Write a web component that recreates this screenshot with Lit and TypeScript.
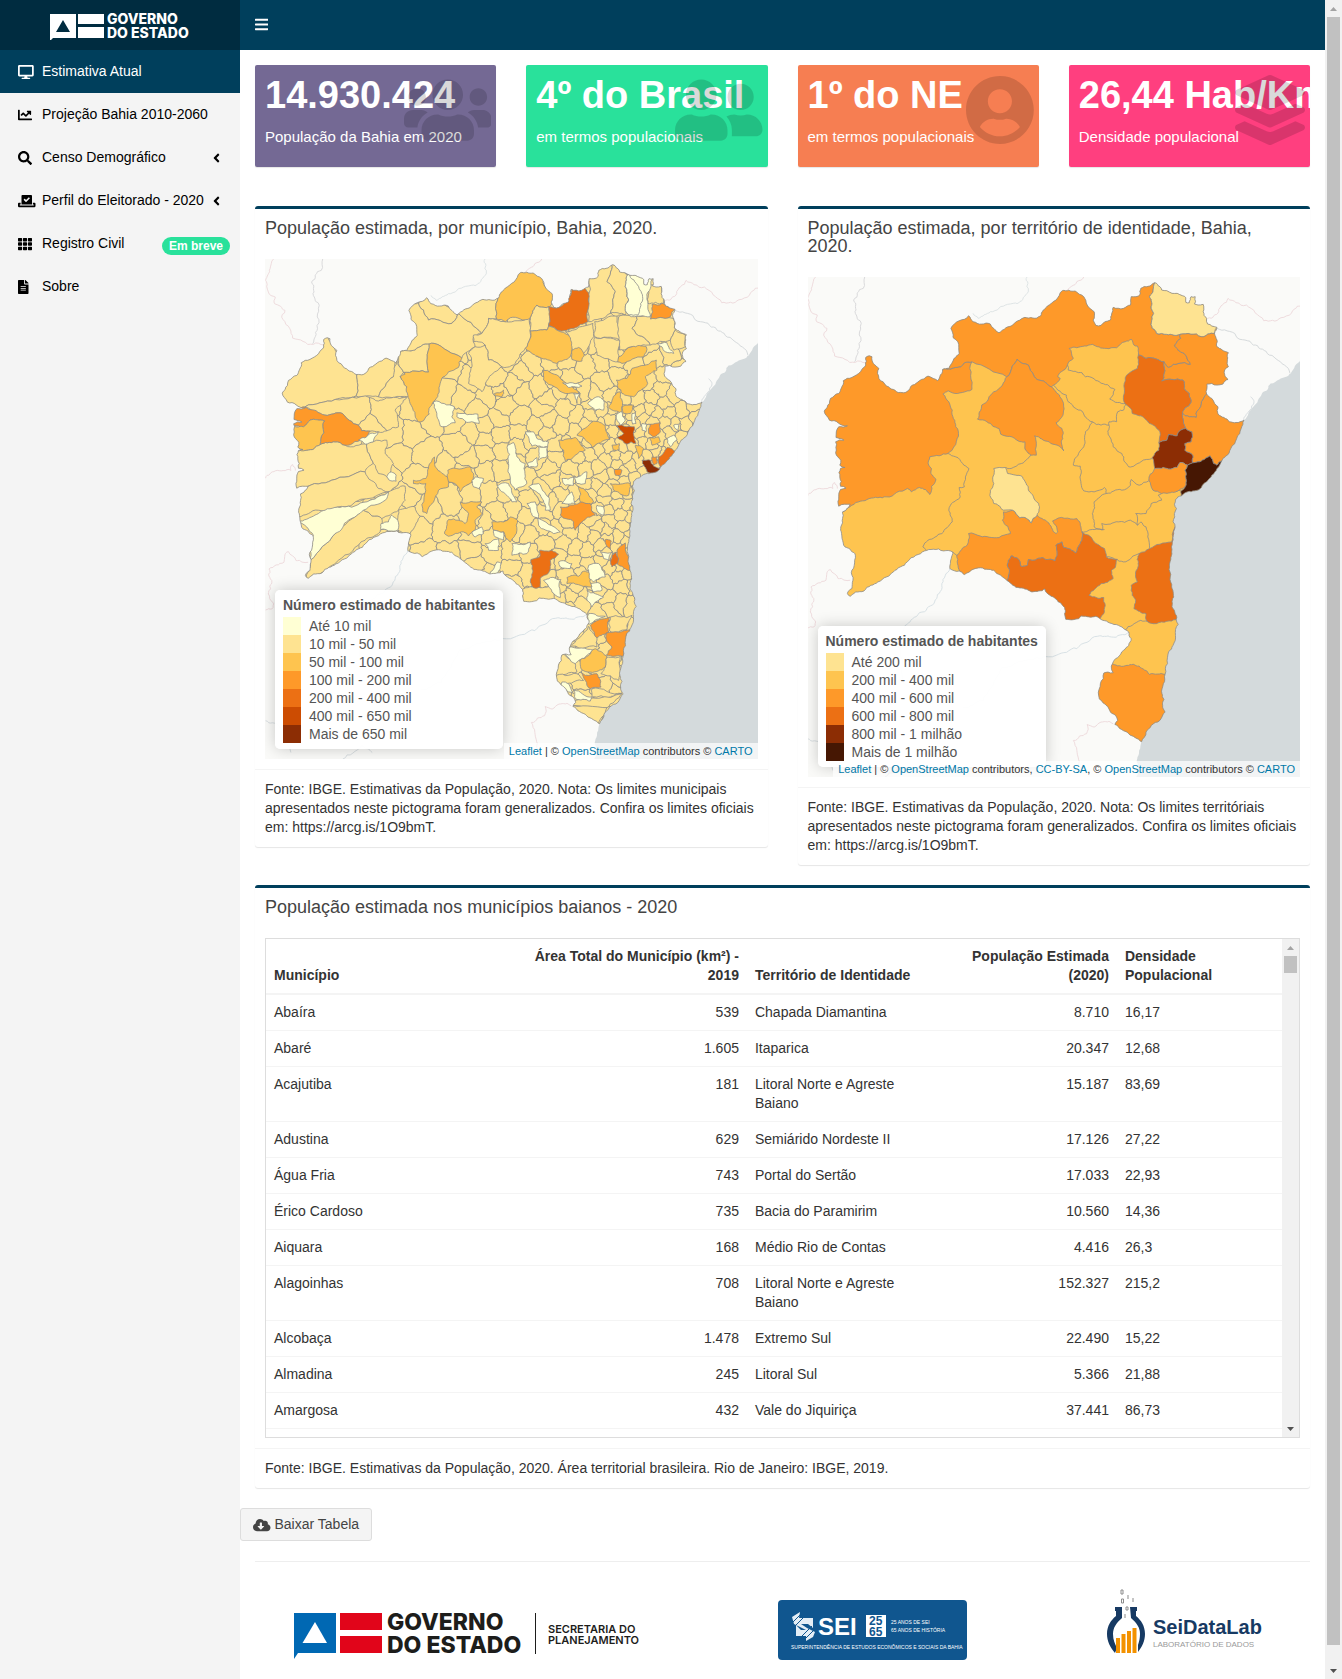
import { LitElement, html, css, svg, nothing } from "lit";
import { customElement, property } from "lit/decorators.js";

/* ---------------------------------------------------------------- icons */

interface Glyph { w: number; d: string }

const ICONS: Record<string, Glyph> = {
  bars: { w: 448, d: "M16 132h416c8.837 0 16-7.163 16-16V76c0-8.837-7.163-16-16-16H16C7.163 60 0 67.163 0 76v40c0 8.837 7.163 16 16 16zm0 160h416c8.837 0 16-7.163 16-16v-40c0-8.837-7.163-16-16-16H16c-8.837 0-16 7.163-16 16v40c0 8.837 7.163 16 16 16zm0 160h416c8.837 0 16-7.163 16-16v-40c0-8.837-7.163-16-16-16H16c-8.837 0-16 7.163-16 16v40c0 8.837 7.163 16 16 16z" },
  desktop: { w: 576, d: "M528 0H48C21.5 0 0 21.5 0 48v320c0 26.5 21.5 48 48 48h192l-16 48h-72c-13.3 0-24 10.7-24 24s10.7 24 24 24h272c13.3 0 24-10.7 24-24s-10.7-24-24-24h-72l-16-48h192c26.5 0 48-21.5 48-48V48c0-26.5-21.5-48-48-48zm-16 352H64V64h448v288z" },
  chart: { w: 512, d: "M496 384H64V80c0-8.84-7.16-16-16-16H16C7.16 64 0 71.16 0 80v336c0 17.67 14.33 32 32 32h464c8.84 0 16-7.16 16-16v-32c0-8.84-7.16-16-16-16zM464 96H345.94c-21.38 0-32.09 25.85-16.97 40.97l32.4 32.4L288 242.75l-73.37-73.37c-12.5-12.5-32.76-12.5-45.25 0l-68.69 68.69c-6.25 6.25-6.25 16.38 0 22.63l22.62 22.62c6.25 6.25 16.38 6.25 22.63 0L192 237.25l73.37 73.37c12.5 12.5 32.76 12.5 45.25 0l96-96 32.4 32.4c15.12 15.12 40.97 4.41 40.97-16.97V112c.01-8.84-7.15-16-15.99-16z" },
  search: { w: 512, d: "M505 442.7L405.3 343c-4.5-4.5-10.6-7-17-7H372c27.6-35.3 44-79.7 44-128C416 93.1 322.9 0 208 0S0 93.1 0 208s93.1 208 208 208c48.3 0 92.7-16.4 128-44v16.3c0 6.4 2.5 12.5 7 17l99.7 99.7c9.4 9.4 24.6 9.4 33.9 0l28.3-28.3c9.4-9.4 9.4-24.6.1-34zM208 336c-70.7 0-128-57.2-128-128 0-70.7 57.2-128 128-128 70.7 0 128 57.2 128 128 0 70.7-57.2 128-128 128z" },
  vote: { w: 640, d: "M608 320h-64v64h22.4c5.3 0 9.6 3.6 9.6 8v16c0 4.4-4.3 8-9.6 8H73.6c-5.3 0-9.6-3.6-9.6-8v-16c0-4.4 4.3-8 9.6-8H96v-64H32c-17.7 0-32 14.3-32 32v96c0 17.7 14.3 32 32 32h576c17.7 0 32-14.3 32-32v-96c0-17.7-14.3-32-32-32zm-96 64V64.3c0-17.9-14.5-32.3-32.3-32.3H160.4C142.5 32 128 46.5 128 64.3V384h384zM211.2 202l25.5-25.3c4.2-4.2 11-4.2 15.2.1l41.3 41.6 95.2-94.4c4.2-4.2 11-4.2 15.2.1l25.3 25.5c4.2 4.2 4.2 11-.1 15.2L300.5 292c-4.2 4.2-11 4.2-15.2-.1l-74.1-74.7c-4.3-4.2-4.2-11 0-15.2z" },
  grid: { w: 512, d: "M24 32h102q24 0 24 24v80q0 24-24 24H24q-24 0-24-24V56q0-24 24-24zM205 32h102q24 0 24 24v80q0 24-24 24H205q-24 0-24-24V56q0-24 24-24zM386 32h102q24 0 24 24v80q0 24-24 24H386q-24 0-24-24V56q0-24 24-24zM24 192h102q24 0 24 24v80q0 24-24 24H24q-24 0-24-24v-80q0-24 24-24zM205 192h102q24 0 24 24v80q0 24-24 24H205q-24 0-24-24v-80q0-24 24-24zM386 192h102q24 0 24 24v80q0 24-24 24H386q-24 0-24-24v-80q0-24 24-24zM24 352h102q24 0 24 24v80q0 24-24 24H24q-24 0-24-24v-80q0-24 24-24zM205 352h102q24 0 24 24v80q0 24-24 24H205q-24 0-24-24v-80q0-24 24-24zM386 352h102q24 0 24 24v80q0 24-24 24H386q-24 0-24-24v-80q0-24 24-24z" },
  file: { w: 384, d: "M224 136V0H24C10.7 0 0 10.7 0 24v464c0 13.3 10.7 24 24 24h336c13.3 0 24-10.7 24-24V160H248c-13.2 0-24-10.8-24-24zm64 236c0 6.6-5.4 12-12 12H108c-6.6 0-12-5.4-12-12v-8c0-6.6 5.4-12 12-12h168c6.6 0 12 5.4 12 12v8zm0-64c0 6.6-5.4 12-12 12H108c-6.6 0-12-5.4-12-12v-8c0-6.6 5.4-12 12-12h168c6.6 0 12 5.4 12 12v8zm0-72v8c0 6.6-5.4 12-12 12H108c-6.6 0-12-5.4-12-12v-8c0-6.6 5.4-12 12-12h168c6.6 0 12 5.4 12 12zm96-114.1v6.1H256V0h6.1c6.4 0 12.5 2.5 17 7l97.9 98c4.5 4.5 7 10.6 7 16.9z" },
  angle: { w: 256, d: "M31.7 239l136-136c9.4-9.4 24.6-9.4 33.9 0l22.6 22.6c9.4 9.4 9.4 24.6 0 33.9L127.9 256l96.4 96.4c9.4 9.4 9.4 24.6 0 33.9L201.7 409c-9.4 9.4-24.6 9.4-33.9 0l-136-136c-9.5-9.4-9.5-24.6-.1-34z" },
  cloud: { w: 640, d: "M537.6 226.6c4.1-10.7 6.4-22.4 6.4-34.6 0-53-43-96-96-96-19.7 0-38.1 6-53.3 16.2C367 64.2 315.3 32 256 32c-88.4 0-160 71.6-160 160 0 2.7.1 5.4.2 8.1C40.2 219.8 0 273.2 0 336c0 79.5 64.5 144 144 144h368c70.7 0 128-57.3 128-128 0-61.9-44-113.6-102.4-125.4zm-132.9 88.7L299.3 420.7c-6.2 6.2-16.4 6.2-22.6 0L171.3 315.3c-10.1-10.1-2.9-27.3 11.3-27.3H248V176c0-8.8 7.2-16 16-16h48c8.8 0 16 7.2 16 16v112h65.4c14.2 0 21.4 17.2 11.3 27.3z" },
  users: { w: 640, d: "M96 224c35.3 0 64-28.7 64-64s-28.7-64-64-64-64 28.7-64 64 28.7 64 64 64zm448 0c35.3 0 64-28.7 64-64s-28.7-64-64-64-64 28.7-64 64 28.7 64 64 64zm32 32h-64c-17.6 0-33.5 7.1-45.1 18.6 40.3 22.1 68.9 62 75.1 109.4h66c17.7 0 32-14.3 32-32v-32c0-35.3-28.7-64-64-64zm-256 0c61.9 0 112-50.1 112-112S381.9 32 320 32 208 82.1 208 144s50.1 112 112 112zm76.8 32h-8.3c-20.8 10-43.9 16-68.5 16s-47.6-6-68.5-16h-8.3C179.6 288 128 339.6 128 403.2V432c0 26.5 21.5 48 48 48h288c26.5 0 48-21.5 48-48v-28.8c0-63.6-51.6-115.2-115.2-115.2zm-223.7-13.4C161.5 263.1 145.6 256 128 256H64c-35.3 0-64 28.7-64 64v32c0 17.7 14.3 32 32 32h65.9c6.3-47.4 34.9-87.3 75.2-109.4z" },
  friends: { w: 640, d: "M192 256c61.9 0 112-50.1 112-112S253.9 32 192 32 80 82.1 80 144s50.1 112 112 112zm76.8 32h-8.3c-20.8 10-43.9 16-68.5 16s-47.6-6-68.5-16h-8.3C51.6 288 0 339.6 0 403.2V432c0 26.5 21.5 48 48 48h288c26.5 0 48-21.5 48-48v-28.8c0-63.6-51.6-115.2-115.2-115.2zM480 256c53 0 96-43 96-96s-43-96-96-96-96 43-96 96 43 96 96 96zm48 32h-3.8c-13.9 4.8-28.6 8-44.2 8s-30.3-3.2-44.2-8H432c-20.4 0-39.2 5.9-55.7 15.4 24.4 26.3 39.7 61.2 39.7 99.8v38.4c0 2.2-.5 4.3-.6 6.4H592c26.5 0 48-21.5 48-48 0-61.9-50.1-112-112-112z" },
  circle: { w: 496, d: "M248 8C111 8 0 119 0 256s111 248 248 248 248-111 248-248S385 8 248 8zm0 96c48.6 0 88 39.4 88 88s-39.4 88-88 88-88-39.4-88-88 39.4-88 88-88zm0 344c-58.7 0-111.3-26.6-146.5-68.2 18.8-35.4 55.6-59.8 98.5-59.8 2.4 0 4.8.4 7.1 1.1 13 4.2 26.6 6.9 40.9 6.9 14.3 0 28-2.7 40.9-6.9 2.3-.7 4.7-1.1 7.1-1.1 42.9 0 79.7 24.4 98.5 59.8C359.3 421.4 306.7 448 248 448z" },
  layers: { w: 512, d: "M12.41 148.02l232.94 105.67c6.8 3.09 14.49 3.09 21.29 0l232.94-105.67c16.55-7.51 16.55-32.52 0-40.03L266.65 2.31a25.607 25.607 0 0 0-21.29 0L12.41 107.98c-16.55 7.51-16.55 32.53 0 40.04zm487.18 88.28l-58.09-26.33-161.64 73.27c-7.56 3.43-15.59 5.17-23.86 5.17s-16.29-1.74-23.86-5.17L70.51 209.97l-58.1 26.33c-16.55 7.5-16.55 32.5 0 40l232.94 105.59c6.8 3.08 14.49 3.08 21.29 0L499.59 276.3c16.55-7.5 16.55-32.5 0-40zm0 127.8l-57.87-26.23-161.86 73.37c-7.56 3.43-15.59 5.17-23.86 5.17s-16.29-1.74-23.86-5.17L70.29 337.87 12.41 364.1c-16.55 7.5-16.55 32.5 0 40l232.94 105.59c6.8 3.08 14.49 3.08 21.29 0L499.59 404.1c16.55-7.5 16.55-32.5 0-40z" },
};

const icon = (name: string, cls: string) => {
  const g = ICONS[name];
  return html`<svg class=${cls} viewBox="0 0 ${g.w} 512" aria-hidden="true"><path fill="currentColor" d=${g.d}></path></svg>`;
};

/* ------------------------------------------------------------- geometry */

type Pt = [number, number];

const parse = (s: string): Pt[] => s.trim().split(/\s+/).map((p) => p.split(",").map(Number) as Pt);

/** Stable noise in -1..1 for a segment, the same in both directions. */
const noise = (a: Pt, b: Pt, k: number) => {
  const v = Math.sin((a[0] + b[0]) * 12.9898 + (a[1] + b[1]) * 78.233 + k * 37.7) * 43758.5453;
  return (v - Math.floor(v)) * 2 - 1;
};

const split = (a: Pt, b: Pt, depth: number, amount: number): Pt[] => {
  const flip = a[0] > b[0] || (a[0] === b[0] && a[1] > b[1]);
  const [p, q] = flip ? [b, a] : [a, b];
  const dx = q[0] - p[0], dy = q[1] - p[1];
  const len = Math.hypot(dx, dy);
  if (depth === 0 || len < 9) return [a];
  const off = noise(p, q, depth) * Math.min(len * amount, 5) / len;
  const m: Pt = [(p[0] + q[0]) / 2 - dy * off, (p[1] + q[1]) / 2 + dx * off];
  return [...split(a, m, depth - 1, amount), ...split(m, b, depth - 1, amount)];
};

/** Path data of a border with small natural irregularities. */
const path = (pts: Pt[], closed = true, amount = 0.14) => {
  const out: Pt[] = [];
  const n = closed ? pts.length : pts.length - 1;
  for (let i = 0; i < n; i++) out.push(...split(pts[i], pts[(i + 1) % pts.length], 3, amount));
  if (!closed) out.push(pts[pts.length - 1]);
  return "M" + out.map((p) => p[0].toFixed(1) + " " + p[1].toFixed(1)).join("L") + (closed ? "Z" : "");
};

const COAST = "1283,510 1275,535 1262,565 1245,595 1230,618 1218,633 1205,655 1190,675 1175,695 1160,712 1140,722 1120,725 1102,737 1085,748 1082,762 1088,775 1082,790 1083,800 1078,815 1084,830 1080,850 1076,875 1074,905 1068,950 1070,980 1074,1010 1076,1050 1083,1085 1087,1108 1093,1122 1085,1155 1078,1185 1065,1205 1062,1240 1055,1272 1050,1300 1046,1330 1048,1365 1055,1385 1040,1410 1015,1425 1000,1445 987,1474";

const STATE = parse(
  "1025,98 1040,110 1045,120 1060,122 1075,130 1090,130 1105,137 1115,143 1115,157 1125,158 1130,140 1142,140 1143,155 1140,162 1150,165 1165,163 1165,185 1175,205 1178,222 1190,228 1205,232 1203,240 1198,250 1205,270 1205,290 1220,300 1238,308 1238,350 1228,358 1228,378 1237,388 1222,402 1205,405 1190,400 1176,402 1175,432 1190,445 1198,460 1208,470 1208,492 1225,502 1240,515 1260,517 " +
  COAST +
  " 950,1450 910,1422 918,1410 912,1395 895,1380 880,1360 865,1345 863,1335 868,1300 878,1268 890,1265 905,1267 900,1255 903,1240 918,1222 935,1200 950,1185 957,1165 950,1145 940,1138 920,1125 895,1118 875,1110 855,1098 845,1100 825,1098 812,1097 805,1105 790,1108 768,1107 765,1072 740,1047 708,1016 690,1022 670,1025 655,1017 635,1013 615,1005 600,992 580,975 560,960 540,957 515,953 490,965 475,973 460,962 433,955 437,925 441,905 415,902 385,897 360,902 335,915 310,935 290,950 270,965 250,980 225,995 205,1005 185,1022 160,1025 145,1038 137,1030 150,1015 153,990 150,960 158,930 160,915 148,902 130,890 125,878 120,850 118,830 123,805 123,785 140,772 145,762 112,768 112,740 117,718 133,714 117,708 115,680 117,655 130,652 115,645 118,630 103,608 103,575 127,570 104,562 112,530 137,527 110,518 85,510 70,483 85,460 88,445 112,430 125,392 150,382 175,365 190,345 190,322 200,317 208,320 212,340 228,355 228,385 250,408 270,418 290,427 308,425 325,405 345,392 370,378 385,385 398,392 410,370 412,358 430,355 445,325 460,310 456,275 442,262 436,235 460,212 487,197 500,215 525,222 550,222 560,235 575,248 590,238 610,228 630,212 650,202 695,198 715,168 740,150 758,122 795,123 820,140 830,165 850,185 847,210 855,226 870,226 897,210 905,172 935,175 955,165 957,140 983,133 985,115"
);
const STATE_PATH = path(STATE);
const SEA_PATH = path(parse("1480,290 1446,328 1418,370 1385,388 1360,400 1335,430 1310,470 " + COAST + " 980,1500 976,1540 975,1620 1480,1620"));

const C = { a: "#ffffd4", b: "#fee391", c: "#fec44f", d: "#fe9929", e: "#ec7014", f: "#cc4c02", g: "#8c2d04", h: "#461703" };

const TERRITORIES: [string, string][] = [
  [C.d, "0,250 412,250 412,358 425,357 465,350 475,338 497,335 497,418 440,428 428,422 413,432 430,455 440,480 450,530 458,558 445,590 428,610 375,620 372,645 380,655 378,670 393,687 375,733 345,712 322,725 310,715 250,740 200,745 150,765 123,785 0,785"],
  [C.d, "425,357 400,300 400,100 1020,60 1025,98 1010,140 1015,175 1022,190 1018,235 1030,250 1060,253 1098,253 1100,265 1083,285 1110,310 1128,343 1095,340 1065,352 1052,335 1030,327 1000,325 978,315 975,288 965,285 958,268 940,275 915,293 885,295 845,283 800,293 778,295 790,325 773,345 755,365 745,380 752,385 733,405 725,412 715,402 690,390 675,375 660,345 627,328 610,360 597,380 497,335 475,338 465,350"],
  [C.b, "1025,98 1030,60 1260,80 1260,232 1205,232 1198,250 1160,260 1098,253 1060,253 1030,250 1018,235 1022,190 1015,175 1010,140"],
  [C.d, "1098,253 1160,260 1198,250 1300,250 1300,420 1175,432 1160,455 1150,480 1145,502 1125,500 1105,490 1118,470 1130,450 1125,430 1110,415 1107,390 1075,388 1045,393 1052,370 1052,335 1065,352 1095,340 1128,343 1110,310 1083,285 1100,265"],
  [C.d, "1175,432 1300,400 1320,640 1218,633 1205,645 1195,640 1185,617 1150,635 1135,638 1135,615 1112,600 1112,580 1130,575 1132,545 1115,535 1105,490 1125,500 1145,502 1150,480 1160,455"],
  [C.e, "978,315 1000,325 1030,327 1052,335 1052,370 1045,393 1075,388 1107,390 1110,415 1125,430 1130,450 1118,470 1105,490 1115,535 1100,540 1090,557 1065,553 1060,570 1037,578 1040,545 1010,520 980,497 960,490 940,462 937,430 937,400 950,370 975,355 978,330"],
  [C.g, "1115,535 1132,545 1130,575 1112,580 1112,600 1135,615 1135,638 1120,645 1098,637 1090,652 1070,657 1050,652 1025,655 1018,622 1037,600 1037,578 1060,570 1065,553 1090,557 1100,540"],
  [C.d, "1025,655 1050,652 1070,657 1090,652 1098,637 1120,645 1113,660 1113,710 1085,725 1045,730 1020,720 1008,690 1012,672"],
  [C.h, "1185,617 1195,640 1205,645 1218,633 1300,650 1102,780 1100,725 1113,710 1113,660 1120,645 1135,638 1150,635"],
  [C.d, "627,328 660,345 675,375 690,390 715,402 735,420 750,435 762,470 760,495 740,518 757,535 755,575 762,602 720,575 678,557 683,580 683,615 668,615 652,600 650,575 630,572 580,552 575,535 540,515 513,507 525,465 560,425 585,405 597,380 610,360"],
  [C.d, "588,785 615,780 635,803 655,805 668,818 685,795 715,815 740,850 745,845 730,812 800,805 810,825 815,845 810,880 797,908 762,892 757,875 740,885 737,932 700,922 660,928 657,945 637,947 630,925 610,917 602,930 603,975 598,992 520,1000 475,980 463,965 453,915 483,885 487,850 520,857 575,862 608,850 585,810"],
  [C.b, "560,655 592,652 600,670 643,680 660,720 690,760 685,795 668,818 655,805 635,803 615,780 588,780 560,760 550,720 560,700"],
  [C.e, "815,845 880,895 885,920 917,927 900,960 905,985 870,1000 835,1035 878,1042 878,1090 868,1104 850,1130 700,1130 598,992 603,975 602,930 610,917 630,925 637,947 657,945 660,928 700,922 737,932 740,885 757,875 762,892 797,908 810,880"],
  [C.e, "980,910 1010,895 1040,882 1074,875 1078,845 1084,830 1110,850 1120,1108 1087,1108 1060,1113 1030,1120 1003,1113 1000,1090 965,1075 970,1050 960,1035 957,1005 975,995 970,965 978,945"],
  [C.d, "903,1240 945,1245 980,1247 1010,1272 1055,1272 1090,1272 1090,1500 840,1500 840,1240"],
];

const TERRITORY_LINES = [
  "428,610 450,620 470,640 488,655 478,680 475,710 460,712 463,740 435,765 430,780 440,815 410,850 370,870 355,890 365,900",
  "441,905 453,915", "668,615 640,640 610,655 592,652",
  "773,345 775,360 815,368 825,380 865,395 910,418 895,447 942,460",
  "733,405 745,420 770,435 775,455 810,480 845,515 870,525 893,525 893,515 915,515 918,485 935,480 942,462",
  "845,515 825,545 820,590 805,610 790,645 810,648 812,700 820,722 850,725 880,712 885,730",
  "893,525 895,560 905,590 930,610 950,650 985,635 1018,625",
  "885,730 930,720 955,705 957,688 980,705 1008,692",
  "885,730 850,755 845,790 850,830 875,838 872,820 920,815 955,810 975,825 985,815 1000,830 1005,860 1010,893",
  "975,825 975,800 970,790 1000,790 1015,760 1045,750 1035,735 1045,730",
  "815,845 850,838 880,838", "885,920 935,935 980,910", "940,1138 960,1125 985,1110 1003,1113", "1085,725 1102,720",
];

/* Larger municipalities of the north, west and south. */
const MUNICIPALITIES: [string, string][] = [
  ["b", "60,300 200,240 240,300 305,372 303,438 240,448 150,470 100,475 50,430"],
  ["b", "305,372 350,310 395,312 420,335 415,380 370,440 303,438"],
  ["b", "415,380 425,330 445,367 435,380 455,410 460,440 370,440"],
  ["b", "150,470 240,448 343,442 345,490 310,525 262,490 210,495"],
  ["b", "343,442 380,450 410,443 455,442 420,480 430,530 395,542 345,490"],
  ["b", "345,490 395,542 370,545 345,543 320,542 310,525"],
  ["b", "100,600 155,600 195,583 240,575 270,585 335,580 355,640 330,665 230,690 150,715 130,722 100,720"],
  ["b", "130,722 150,715 230,690 330,665 370,715 400,725 270,770 190,780 130,800 100,800"],
  ["b", "240,850 325,780 380,805 375,845 330,870 250,930 150,1000 165,930"],
  ["b", "335,580 395,570 390,610 415,640 395,680 370,670 355,640"],
  ["b", "400,725 450,708 450,750 430,780 380,805 325,780 345,750"],
  ["b", "430,780 480,770 495,800 465,850 428,840"],
  ["b", "490,158 510,132 530,160 555,155 610,190 590,220 520,210 505,180"],
  ["b", "430,305 440,170 490,158 505,180 520,210 590,220 610,190 680,250 655,260 660,290 620,324 537,280 522,282 480,300"],
  ["b", "428,305 480,300 522,282 520,366 445,367 430,340"],
  ["b", "610,190 650,140 728,145 724,207 700,205 680,250"],
  ["b", "700,205 750,215 825,203 825,265 810,295 775,345 740,350 700,330 690,285 655,275 655,255 680,250"],
  ["b", "660,290 690,285 700,330 740,350 700,385 680,425 640,400 650,340 640,310"],
  ["b", "1000,85 1025,55 1068,35 1055,95 1080,125 1065,190 1000,215"],
  ["b", "1055,95 1068,35 1120,75 1110,110 1120,150 1110,195 1065,190 1080,125"],
  ["b", "1018,215 1085,198 1093,270 1018,260"],
  ["b", "1090,200 1145,198 1130,235 1185,285 1130,290 1093,300"],
  ["b", "1145,198 1255,205 1260,240 1245,270 1185,285 1130,235"],
  ["b", "1260,240 1290,255 1290,290 1255,300 1245,270"],
  ["b", "1180,110 1215,105 1225,160 1177,160"],
  ["b", "1018,262 1093,270 1090,335 1025,315"],
  ["b", "930,245 1013,220 1015,260 985,310 950,300 940,255"],
  ["b", "825,203 845,165 883,170 880,228 875,240 825,243"],
  ["b", "940,1190 1000,1128 1025,1162 1025,1190"],
  ["b", "900,1275 915,1205 960,1240 965,1265"], ["b", "895,1275 965,1270 985,1290 935,1300 895,1310"],
  ["b", "1010,1315 1100,1328 1065,1340 1010,1340"],
  ["b", "945,1365 960,1350 1100,1330 1055,1372"], ["b", "940,1368 1055,1372 1030,1430"],
  ["b", "1055,1220 1095,1218 1090,1290 1037,1270 1050,1250"],
  ["b", "1065,1100 1130,1095 1115,1138 1063,1142"],
  ["b", "800,1018 850,1010 900,1010 900,1060 800,1060"],
  ["c", "435,380 450,372 445,367 520,366 522,282 537,280 620,324 610,352 580,365 555,400 540,450 525,470 522,492 505,512 488,515 465,460 455,410"],
  ["c", "728,145 750,112 770,93 780,75 800,60 830,60 860,78 875,115 895,130 883,170 845,165 825,203 765,203 750,215 724,207"],
  ["d", "110,475 155,473 210,495 262,490 310,525 320,542 345,543 330,565 270,585 240,575 195,583 208,512 165,510 145,530 105,530"],
  ["c", "105,532 145,530 165,510 208,512 195,583 155,600 115,595"],
  ["a", "535,455 598,470 590,500 600,518 555,527 545,490"], ["a", "605,488 668,492 672,520 635,517 605,500"],
  ["a", "310,570 345,550 370,545 355,575 330,582"],
  ["c", "475,690 512,685 520,650 538,620 540,650 582,685 580,710 550,720 515,790 503,785 512,700 475,700"],
  ["c", "578,660 645,650 655,670 650,695 615,725 600,700 580,695"],
  ["a", "650,690 660,680 685,685 670,715 655,710"], ["a", "395,680 408,665 423,675 423,693 400,688"],
  ["c", "718,430 745,420 742,438 720,438"],
  ["c", "615,755 680,755 665,770 680,790 660,810 660,840 640,857 625,845 580,858 568,850 580,808 610,810 630,820 640,790 620,770"],
  ["c", "710,815 745,815 765,800 787,810 785,840 765,875 745,845 715,840"],
  ["a", "125,815 170,800 210,780 270,770 345,750 400,725 390,750 325,780 280,810 240,850 165,930 165,900 175,855 155,830"],
  ["a", "378,820 400,815 410,795 428,810 428,840 400,842 378,838"],
  ["a", "650,845 680,830 685,850 660,860"], ["a", "690,880 730,865 730,900 700,900"],
  ["a", "715,840 745,845 745,870 720,860"], ["a", "700,975 725,935 738,940 725,975"],
  ["e", "880,170 915,170 937,150 950,118 980,110 1000,128 998,215 955,235 925,242 880,228"],
  ["c", "825,243 875,240 880,228 940,255 950,290 945,320 905,340 860,325 825,305 810,295 825,265"],
  ["c", "950,300 970,292 987,315 980,333 950,328"],
  ["a", "1120,70 1160,80 1190,60 1190,88 1175,140 1185,200 1155,198 1120,195 1110,175 1120,150 1110,110"],
  ["a", "1120,70 1150,110 1162,150 1148,195 1120,195 1110,175 1120,150 1110,110"],
  ["d", "1190,163 1220,160 1260,175 1245,200 1185,207"],
  ["c", "1090,320 1110,300 1130,290 1173,290 1165,320 1100,340 1087,335"],
  ["c", "1153,348 1203,330 1205,360 1170,380 1177,400 1135,440 1100,430 1083,390 1115,385 1130,355"],
  ["c", "862,360 915,385 965,420 970,432 930,430 865,390"],
  ["a", "922,398 980,408 940,412"], ["a", "955,430 975,430 965,460"], ["a", "997,460 1030,440 1045,450 1045,480 1020,480"],
  ["c", "1083,430 1095,425 1100,490 1060,472"], ["c", "1100,470 1135,465 1125,490 1105,490"],
  ["a", "1083,495 1100,485 1110,510 1095,527"], ["a", "1205,280 1235,278 1255,310 1230,305"],
  ["a", "1255,525 1273,520 1270,545"], ["a", "1235,565 1255,555 1265,570 1245,590"], ["a", "1160,520 1175,522 1172,545 1160,540"],
  ["a", "1130,490 1140,488 1142,520 1132,522"],
  ["f", "1083,527 1115,530 1137,530 1142,580 1127,575 1115,582 1100,570 1085,562 1105,550"],
  ["d", "1185,522 1215,518 1215,545 1195,560 1180,550"],
  ["e", "1210,620 1235,592 1262,605 1215,660"], ["g", "1160,630 1185,630 1195,648 1220,655 1193,675 1175,665"],
  ["d", "1190,620 1205,620 1205,640 1195,645"], ["c", "1183,562 1210,560 1215,575 1190,585"], ["c", "1140,585 1165,595 1150,625"],
  ["c", "1070,585 1092,580 1092,598 1074,600"],
  ["c", "965,555 1015,513 1050,525 1063,568 1010,592"], ["c", "910,570 960,562 990,600 930,632 925,600"],
  ["d", "1077,658 1100,660 1095,675 1080,675"], ["c", "1065,700 1125,700 1120,735 1095,732 1075,720"],
  ["a", "757,585 775,577 785,620 810,640 815,700 780,720 765,690 760,640"],
  ["a", "810,545 835,545 845,565 880,575 877,590 830,588"], ["a", "850,590 877,590 875,620 850,630"], ["a", "815,640 845,622 845,650 820,652"],
  ["a", "820,710 850,700 880,740 885,780 870,780 860,745"], ["a", "920,685 955,680 955,705 930,705"],
  ["a", "955,680 995,665 990,700 965,700"], ["a", "920,760 950,725 960,760"], ["a", "725,705 760,700 785,755 770,755 735,720"],
  ["c", "970,710 985,715 1015,755 1005,765 975,755"],
  ["d", "915,770 945,765 980,755 1005,760 1020,795 980,815 960,840 955,815 915,795"],
  ["d", "1050,868 1068,872 1065,895 1053,885"], ["d", "1085,900 1110,878 1125,960 1090,945"],
  ["e", "1070,915 1080,905 1090,925 1087,940 1070,950"],
  ["e", "827,928 853,920 853,900 890,900 910,912 885,930 885,955 855,985 855,1010 835,1012 825,995 833,965"],
  ["a", "865,990 885,982 917,988 915,1042 890,1025"], ["a", "845,800 915,845 895,850 850,825"],
  ["a", "815,760 840,755 850,805 830,795"], ["a", "770,880 825,875 815,910 770,915"],
  ["a", "1000,945 1030,940 1050,980 1015,995 1000,985"], ["a", "995,1020 1045,1040 1010,1070 995,1050"],
  ["a", "1000,1090 1050,1098 1000,1122"], ["a", "910,935 950,940 945,955 915,950"],
  ["a", "940,1190 1015,1200 995,1215 960,1240 925,1205"], ["a", "920,1295 940,1300 955,1330 915,1310"],
  ["a", "955,1320 1010,1340 1005,1352 960,1345"], ["a", "1005,1000 1035,1000 1040,1020 1015,1025"],
  ["a", "1035,905 1070,905 1060,930 1045,925"], ["a", "1025,765 1045,770 1045,795 1025,780"],
  ["c", "935,982 970,978 980,965 1000,965 1010,1010 975,1005 935,1000"],
  ["c", "975,1228 1020,1195 1055,1220 1050,1250 1005,1265 977,1255"],
  ["d", "1005,1125 1063,1100 1060,1145 1025,1162"], ["d", "1053,1148 1125,1138 1105,1218 1053,1215 1070,1190 1053,1170"],
  ["d", "977,1265 990,1275 1025,1270 1037,1310 1005,1315 990,1290"],
];

/** Remaining small municipalities: cells around evenly scattered seats. */
const smallCells = (): string[] => {
  let seed = 20201;
  const rnd = () => ((seed = (seed * 16807) % 2147483647) / 2147483647);
  const spacing = (x: number, y: number) => {
    if (y > 1080) return 52;
    if (x > 1000 && y > 470 && y < 1030) return 26;
    if (x > 860 && y > 400) return 35;
    if (x < 640) return 62;
    if (y < 420 && x > 860) return 44;
    return 42;
  };
  const seats: Pt[] = [];
  for (let i = 0; i < 16000; i++) {
    const x = 380 + rnd() * 960, y = 280 + rnd() * 1150, r = spacing(x, y);
    if (seats.every((s) => Math.hypot(s[0] - x, s[1] - y) > r)) seats.push([x, y]);
  }
  return seats.map((s) => {
    let cell: Pt[] = [[s[0] - 90, s[1] - 90], [s[0] + 90, s[1] - 90], [s[0] + 90, s[1] + 90], [s[0] - 90, s[1] + 90]];
    for (const o of seats) {
      const dx = o[0] - s[0], dy = o[1] - s[1];
      if (o === s || Math.hypot(dx, dy) > 200) continue;
      const mid = (o[0] * o[0] + o[1] * o[1] - s[0] * s[0] - s[1] * s[1]) / 2;
      const side = (p: Pt) => p[0] * dx + p[1] * dy - mid;
      const next: Pt[] = [];
      cell.forEach((p, i) => {
        const q = cell[(i + 1) % cell.length], a = side(p), b = side(q);
        if (a <= 0) next.push(p);
        if (a <= 0 !== b <= 0) next.push([p[0] + ((q[0] - p[0]) * a) / (a - b), p[1] + ((q[1] - p[1]) * a) / (a - b)]);
      });
      cell = next;
    }
    return path(cell.map((p) => [Math.round(p[0]), Math.round(p[1])] as Pt), true, 0.3);
  });
};

const BASE_LINES: [string, string][] = [
  ["#efdcde", "45,81 35,110 22,145 30,180 50,195 48,215 78,235 72,262 92,290 100,318 130,328 160,337 190,338"],
  ["#dadadc", "187,81 183,115 155,150 160,190 177,220 172,290 158,335"],
  ["#dfe5e6", "656,81 660,120 635,155 600,163 550,185 515,205 500,190"],
  ["#efdcde", "820,81 800,95 770,122"],
  ["#efdcde", "1178,205 1210,185 1237,145 1260,158 1290,165 1340,212 1390,203 1420,190 1446,168"],
  ["#d6dadc", "1205,235 1260,258 1310,285 1350,310 1400,345 1416,370"],
  ["#efdcde", "22,738 50,716 95,715 100,697 108,715"],
  ["#efdcde", "145,990 110,985 88,958 75,990 32,1010 40,1050 30,1085 43,1110 40,1130 22,1133"],
  ["#d9e2e6", "433,955 410,1000 395,1045 365,1080 320,1110 300,1140 285,1190 300,1300 330,1320"],
  ["#d9e2e6", "950,1145 900,1160 860,1158 800,1195 740,1215 650,1230 585,1250 560,1300 530,1350 470,1370"],
  ["#efdcde", "905,1420 870,1415 850,1430 830,1422 828,1450 790,1470 800,1500 805,1545 820,1555"],
  ["#d9dfe2", "22,1465 60,1480 95,1560"], ["#d9dfe2", "245,1580 300,1540 330,1560"],
  ["#dadfe2", "1283,510 1300,480 1312,455 1302,440"],
];

const CELLS = smallCells();

@customElement("bahia-map")
export class BahiaMap extends LitElement {
  @property() level: "municipio" | "territorio" = "municipio";
  @property({ type: Array }) legend: [string, string][] = [];
  @property({ type: Boolean, attribute: "share-alike" }) shareAlike = false;

  static styles = css`
    :host { display: block; position: relative; height: 500px; overflow: hidden; background: #fafaf8; }
    .canvas { display: block; width: 100%; height: 100%; }
    .area { stroke: #8c8c8c; stroke-opacity: 0.8; stroke-width: 1; vector-effect: non-scaling-stroke; stroke-linejoin: round; }
    .line { fill: none; stroke: #8c8c8c; stroke-opacity: 0.8; stroke-width: 1; vector-effect: non-scaling-stroke; }
    .base { fill: none; stroke-width: 1; vector-effect: non-scaling-stroke; }
    .legend { position: absolute; left: 10px; bottom: 10px; padding: 6px 8px; background: rgba(255, 255, 255, 0.95);
      border-radius: 5px; box-shadow: 0 0 15px rgba(0, 0, 0, 0.2); color: #555; font-size: 14px; line-height: 18px; }
    .legend-title { display: block; line-height: 18px; height: 21px; font-weight: bold; white-space: nowrap; }
    .entries { list-style: none; margin: 0; padding: 0; }
    .entry { display: flex; gap: 8px; height: 18px; line-height: 18px; }
    .swatch { width: 18px; height: 18px; }
    .credit { position: absolute; right: 0; bottom: 0; padding: 0 5px; background: rgba(255, 255, 255, 0.7);
      color: #333; font-size: 11px; line-height: 16px; white-space: nowrap; }
    .credit a { color: #0078a8; text-decoration: none; }
  `;

  render() {
    const fine = this.level === "municipio";
    const place = `translate(${fine ? -7 : -8} -27) scale(0.3457 0.3333)`;
    return html`
      <svg class="canvas" viewBox="0 0 492 500" preserveAspectRatio="xMinYMin slice" role="img" aria-label="Mapa da Bahia">
        <defs><clipPath id="state"><path transform=${place} d=${STATE_PATH}></path></clipPath></defs>
        <g transform=${place}>
          ${BASE_LINES.map(([c, p]) => svg`<path class="base" stroke=${c} d=${path(parse(p), false, 0.2)}></path>`)}
          <path fill="#d4dadc" d=${SEA_PATH}></path>
          <path fill=${fine ? C.b : C.c} d=${STATE_PATH}></path>
        </g>
        <g clip-path="url(#state)">
          ${fine
            ? svg`<g transform="translate(-10 -9) scale(0.3333)">
                ${CELLS.map((d) => svg`<path class="area" fill=${C.b} d=${d}></path>`)}
                ${MUNICIPALITIES.map(([c, p]) => svg`<path class="area" fill=${C[c as keyof typeof C]} d=${path(parse(p))}></path>`)}
              </g>`
            : svg`<g transform=${place}>
                ${TERRITORY_LINES.map((p) => svg`<path class="line" d=${path(parse(p), false)}></path>`)}
                ${TERRITORIES.map(([c, p]) => svg`<path class="area" fill=${c} d=${path(parse(p))}></path>`)}
              </g>`}
        </g>
        <g transform=${place}><path class="line" d=${STATE_PATH}></path></g>
      </svg>
      <div class="legend">
        <strong class="legend-title">Número estimado de habitantes</strong>
        <ul class="entries">
          ${this.legend.map(([c, t]) => html`<li class="entry">
            <svg class="swatch" viewBox="0 0 18 18" aria-hidden="true"><rect width="18" height="18" fill=${c}></rect></svg>${t}</li>`)}
        </ul>
      </div>
      <div class="credit"><a href="#leaflet">Leaflet</a> | © <a href="#osm">OpenStreetMap</a> contributors${this.shareAlike
        ? html`, <a href="#cc">CC-BY-SA</a>, © <a href="#osm">OpenStreetMap</a> contributors`
        : nothing} © <a href="#carto">CARTO</a></div>`;
  }
}

/* ----------------------------------------------------------------- page */

const MENU = [
  { icon: "desktop", label: "Estimativa Atual", active: true },
  { icon: "chart", label: "Projeção Bahia 2010-2060" },
  { icon: "search", label: "Censo Demográfico", more: true },
  { icon: "vote", label: "Perfil do Eleitorado - 2020", more: true },
  { icon: "grid", label: "Registro Civil", badge: "Em breve" },
  { icon: "file", label: "Sobre" },
];

const CARDS = [
  { tone: "purple", value: "14.930.424", text: "População da Bahia em 2020", icon: "users" },
  { tone: "green", value: "4º do Brasil", text: "em termos populacionais", icon: "friends" },
  { tone: "orange", value: "1º do NE", text: "em termos populacionais", icon: "circle" },
  { tone: "pink", value: "26,44 Hab/Km²", text: "Densidade populacional", icon: "layers" },
];

const CITY_LEGEND: [string, string][] = [
  [C.a, "Até 10 mil"], [C.b, "10 mil - 50 mil"], [C.c, "50 mil - 100 mil"], [C.d, "100 mil - 200 mil"],
  [C.e, "200 mil - 400 mil"], [C.f, "400 mil - 650 mil"], [C.g, "Mais de 650 mil"],
];
const TERRITORY_LEGEND: [string, string][] = [
  [C.b, "Até 200 mil"], [C.c, "200 mil - 400 mil"], [C.d, "400 mil - 600 mil"], [C.e, "600 mil - 800 mil"],
  [C.g, "800 mil - 1 milhão"], [C.h, "Mais de 1 milhão"],
];

const ROWS = [
  ["Abaíra", "539", "Chapada Diamantina", "8.710", "16,17"],
  ["Abaré", "1.605", "Itaparica", "20.347", "12,68"],
  ["Acajutiba", "181", "Litoral Norte e Agreste Baiano", "15.187", "83,69"],
  ["Adustina", "629", "Semiárido Nordeste II", "17.126", "27,22"],
  ["Água Fria", "743", "Portal do Sertão", "17.033", "22,93"],
  ["Érico Cardoso", "735", "Bacia do Paramirim", "10.560", "14,36"],
  ["Aiquara", "168", "Médio Rio de Contas", "4.416", "26,3"],
  ["Alagoinhas", "708", "Litoral Norte e Agreste Baiano", "152.327", "215,2"],
  ["Alcobaça", "1.478", "Extremo Sul", "22.490", "15,22"],
  ["Almadina", "245", "Litoral Sul", "5.366", "21,88"],
  ["Amargosa", "432", "Vale do Jiquiriça", "37.441", "86,73"],
];

@customElement("app-root")
export class AppRoot extends LitElement {
  static styles = css`
    :host { display: flex; min-height: 100vh; background: #fff; color: #333;
      font: 14px/19px "Liberation Sans", Arial, sans-serif; }
    * { box-sizing: border-box; }
    h2, h3, p { margin: 0; font-weight: normal; }

    .sidebar { flex: none; width: 240px; background: #f4f4f4; }
    .brand { display: flex; justify-content: center; align-items: center; height: 50px; background: #002c40; }
    .brand svg { width: 142px; height: 30px; }
    .menu { list-style: none; margin: 0; padding: 0; }
    .menu a { display: flex; align-items: center; gap: 4px; padding: 12px 10px 12px 18px; color: #000; text-decoration: none; }
    .menu .active { background: #003f5c; color: #fff; }
    .slot { flex: none; display: flex; width: 20px; }
    .glyph { height: 14px; }
    .more { height: 14px; margin: 0 10px 0 auto; }
    .badge { align-self: flex-end; margin: 0 0 -2px auto; padding: 0 7px; border-radius: 9px; background: #29e19b;
      color: #fff; font-size: 12px; font-weight: bold; line-height: 18px; }

    .main { flex: 1; min-width: 0; }
    .topbar { display: flex; align-items: center; height: 50px; padding: 0 15px 2px; background: #003f5c; }
    .toggle { display: flex; margin: 0; padding: 0; border: 0; background: none; color: #fff; }
    .toggle svg { height: 15px; }
    .content { padding: 15px; }

    .cards { display: grid; grid-template-columns: repeat(4, minmax(0, 1fr)); gap: 30px; margin-bottom: 39px; }
    .card { position: relative; overflow: hidden; padding: 10px 10px 20px; border-radius: 2px; color: #fff;
      box-shadow: 0 1px 1px rgba(0, 0, 0, 0.1); white-space: nowrap; }
    .card h3 { margin-bottom: 12px; font-size: 38px; line-height: 40px; font-weight: bold; }
    .card p { font-size: 15px; line-height: 20px; }
    .purple { background: #746994; }
    .green { background: #29e19b; }
    .orange { background: #f67e52; }
    .pink { background: #ff3f7f; }
    .mark { position: absolute; top: 10px; right: 5px; height: 70px; color: rgba(0, 0, 0, 0.15); }

    .maps { display: grid; grid-template-columns: repeat(2, minmax(0, 1fr)); gap: 30px; align-items: start; margin-bottom: 20px; }
    .box { border-top: 3px solid #003f5c; border-radius: 3px; background: #fff; box-shadow: 0 1px 1px rgba(0, 0, 0, 0.1); }
    .box h2 { padding: 10px 10px 12px; color: #444; font-size: 18px; line-height: 18px; }
    .body { padding: 10px; }
    .source { padding: 10px; border-top: 1px solid #f4f4f4; }

    .scroller { display: flex; height: 500px; border: 1px solid #ddd; overflow: hidden; }
    .rows { flex: 1; min-width: 0; overflow: hidden; }
    table { width: 100%; border-collapse: separate; border-spacing: 0; table-layout: fixed; }
    th, td { padding: 8px; text-align: left; vertical-align: top; border-bottom: 1px solid #f4f4f4; }
    th { vertical-align: bottom; border-bottom-width: 2px; }
    .num { text-align: right; }
    .wide { width: 23.67%; }
    .mid { width: 18.21%; }

    .bar { flex: none; display: flex; flex-direction: column; align-items: center; width: 17px; background: #f1f1f1; }
    .bar svg { flex: none; width: 17px; height: 17px; }
    .thumb { width: 13px; background: #c1c1c1; }
    .bar .thumb { flex: none; height: 17px; }
    .bar .gap { flex: 1; }
    .page-bar { position: sticky; top: 0; height: 100vh; }
    .page-bar .thumb { flex: 1; height: auto; }
    .page-bar .gap { flex: none; height: 17px; }

    .download { display: inline-flex; align-items: center; gap: 4px; margin: 20px 0 20px -15px; padding: 6px 12px;
      border: 1px solid #ddd; border-radius: 3px; background: #f4f4f4; color: #444; font: inherit; }
    .rule { margin: 0; border: 0; border-top: 1px solid #eee; }
    .logos { display: grid; grid-template-columns: 5fr 4fr 3fr; justify-items: center; align-items: end; margin: 23px -15px 0; }
    .brandtext { font-family: Inter, Lato, sans-serif; font-weight: 800; }
    .dept { font-family: Inter, Lato, sans-serif; font-weight: 600; font-size: 11px; }
    .sei { font-weight: bold; }
    .motto { font-weight: normal; font-size: 5px; }
    .lab { font-weight: bold; font-size: 20px; }
  `;

  private arrow(up: boolean, color: string) {
    return html`<svg viewBox="0 0 17 17" aria-hidden="true"><path fill=${color} d=${up ? "M5 11h7L8.500 7z" : "M5 7h7L8.500 11z"}></path></svg>`;
  }

  private govLogo() {
    return html`<svg width="346" height="57" viewBox="0 0 346 57" role="img" aria-label="Governo do Estado, Secretaria do Planejamento">
      <path fill="#0068b3" d="M1 10h42v40H5l-4 6z"></path><path fill="#fff" d="M22 19L34 40H9.500z"></path>
      <path fill="#e1051a" d="M47 10h42v17H47zM47 33h42v17H47z"></path>
      <text class="brandtext" fill="#1d1d1b" font-size="23"><tspan x="94" y="27">GOVERNO</tspan><tspan x="94" y="50">DO ESTADO</tspan></text>
      <path fill="#1d1d1b" d="M242 10h1v41h-1z"></path>
      <text class="dept" fill="#1d1d1b"><tspan x="255" y="30">SECRETARIA DO</tspan><tspan x="255" y="41">PLANEJAMENTO</tspan></text>
    </svg>`;
  }

  private seiLogo() {
    return html`<svg width="189" height="60" viewBox="0 0 189 60" role="img" aria-label="SEI">
      <rect width="189" height="60" rx="4" fill="#10568f"></rect>
      <path fill="#e4eef6" d="M14 17l8-5-1 6h14v10l-5-4h-7l6 4 8 4-2 5-7 4v-5H18V25l5 5h5l-12-6z"></path>
      <path stroke="#10568f" stroke-width="1" d="M13 24l10-10M16 27l10-10M24 36l10-10M27 39l8-8"></path>
      <g class="sei" fill="#fff"><text x="40" y="35" font-size="24">SEI</text>
      <rect x="88" y="15" width="20" height="22"></rect>
      <text fill="#10568f" font-size="12"><tspan x="91" y="25">25</tspan><tspan x="91" y="36">65</tspan></text></g>
      <g class="motto" fill="#fff"><text x="113" y="24">25 ANOS DE SEI</text><text x="113" y="32">65 ANOS DE HISTÓRIA</text>
      <text x="13" y="49">SUPERINTENDÊNCIA DE ESTUDOS ECONÔMICOS E SOCIAIS DA BAHIA</text></g>
    </svg>`;
  }

  private labLogo() {
    return html`<svg width="164" height="75" viewBox="0 0 164 75" role="img" aria-label="SeiDataLab">
      <g fill="none" stroke="#8b8b8b"><path d="M14 5h2v4h-2zM14.500 14h2v4h-2zM19 22h2v3h-2zM21 10v4M26 13v4M18 29v4"></path></g>
      <path fill="#173a63" d="M8 22h7v11C9 38 6 43 6 49c0 6 2 10 4 14l-2 5C3 62 0 56 0 49c0-8 4-14 9-18v-5H8zM23 22h7v4h-1v5c5 4 9 10 9 18 0 7-3 13-7 18V60c1-3 2-7 2-11 0-6-3-11-9-16z"></path>
      <path fill="#f39200" d="M9 53h4v15H9zM14.500 49h4v19h-4zM20 46h4v22h-4zM25.500 43h4v25h-4z"></path>
      <text class="lab" x="46" y="49" fill="#173a63">SeiDataLab</text>
      <text x="46" y="62" fill="#9a9a9a" font-size="8">LABORATÓRIO DE DADOS</text>
    </svg>`;
  }

  render() {
    return html`
      <aside class="sidebar">
        <div class="brand"><svg viewBox="0 0 142 30" role="img" aria-label="Governo do Estado">
          <path fill="#fff" fill-rule="evenodd" d="M1 4h26v24H4l-3 3zM7 22h14L14 10zM29 4h26v10H29zM29 17h26v11H29z"></path>
          <text class="brandtext" fill="#fff" font-size="14"><tspan x="58" y="14">GOVERNO</tspan><tspan x="58" y="28">DO ESTADO</tspan></text>
        </svg></div>
        <nav><ul class="menu">
          ${MENU.map((m) => html`<li><a href="#" class=${m.active ? "active" : ""}>
            <span class="slot">${icon(m.icon, "glyph")}</span>${m.label}
            ${m.more ? icon("angle", "more") : nothing}
            ${m.badge ? html`<span class="badge">${m.badge}</span>` : nothing}</a></li>`)}
        </ul></nav>
      </aside>
      <div class="main">
        <header class="topbar"><button class="toggle" aria-label="Menu">${icon("bars", "")}</button></header>
        <main class="content">
          <section class="cards">
            ${CARDS.map((c) => html`<article class="card ${c.tone}"><h3>${c.value}</h3><p>${c.text}</p>${icon(c.icon, "mark")}</article>`)}
          </section>
          <section class="maps">
            <article class="box">
              <h2>População estimada, por município, Bahia, 2020.</h2>
              <div class="body"><bahia-map .legend=${CITY_LEGEND}></bahia-map></div>
              <p class="source">Fonte: IBGE. Estimativas da População, 2020. Nota: Os limites municipais apresentados neste pictograma foram generalizados. Confira os limites oficiais em: https://arcg.is/1O9bmT.</p>
            </article>
            <article class="box">
              <h2>População estimada, por território de identidade, Bahia, 2020.</h2>
              <div class="body"><bahia-map level="territorio" share-alike .legend=${TERRITORY_LEGEND}></bahia-map></div>
              <p class="source">Fonte: IBGE. Estimativas da População, 2020. Nota: Os limites territóriais apresentados neste pictograma foram generalizados. Confira os limites oficiais em: https://arcg.is/1O9bmT.</p>
            </article>
          </section>
          <section class="box">
            <h2>População estimada nos municípios baianos - 2020</h2>
            <div class="body"><div class="scroller">
              <div class="rows"><table>
                <thead><tr>
                  <th class="wide" scope="col">Município</th>
                  <th class="wide num" scope="col">Área Total do Município (km²) - 2019</th>
                  <th class="mid" scope="col">Território de Identidade</th>
                  <th class="mid num" scope="col">População Estimada (2020)</th>
                  <th scope="col">Densidade<br>Populacional</th>
                </tr></thead>
                <tbody>${ROWS.map((r) => html`<tr>${r.map((v, i) => html`<td class=${i === 1 || i === 3 ? "num" : ""}>${v}</td>`)}</tr>`)}</tbody>
              </table></div>
              <div class="bar" aria-hidden="true">${this.arrow(true, "#a3a3a3")}<div class="thumb"></div><div class="gap"></div>${this.arrow(false, "#505050")}</div>
            </div></div>
            <p class="source">Fonte: IBGE. Estimativas da População, 2020. Área territorial brasileira. Rio de Janeiro: IBGE, 2019.</p>
          </section>
          <button class="download">${icon("cloud", "glyph")}Baixar Tabela</button>
          <hr class="rule">
          <footer class="logos">${this.govLogo()}${this.seiLogo()}${this.labLogo()}</footer>
        </main>
      </div>
      <div class="bar page-bar" aria-hidden="true">${this.arrow(true, "#a3a3a3")}<div class="thumb"></div><div class="gap"></div>${this.arrow(false, "#505050")}</div>`;
  }
}
